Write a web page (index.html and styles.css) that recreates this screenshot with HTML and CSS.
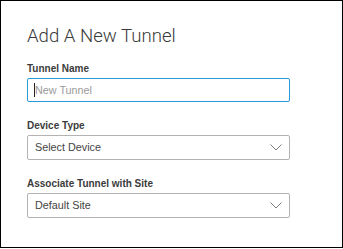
FILE: index.html
```html
<!DOCTYPE html>
<html lang="en">
<head>
    <meta charset="UTF-8">
    <meta name="viewport" content="width=device-width, initial-scale=1.0">
    <title>Add A New Tunnel</title>
    <link rel="stylesheet" href="styles.css">
</head>
<body>
    <div class="dialog">
        <h1>Add A New Tunnel</h1>

        <div class="field">
            <label for="tunnel-name">Tunnel Name</label>
            <div class="input-wrap">
                <input type="text" id="tunnel-name" placeholder="New Tunnel">
                <span class="caret"></span>
            </div>
        </div>

        <div class="field">
            <label>Device Type</label>
            <div class="select">
                <span>Select Device</span>
                <svg class="chevron" width="12" height="7" viewBox="0 0 12 7">
                    <polyline points="0.5,0.5 6,6 11.5,0.5" fill="none" stroke="#7a7a7a" stroke-width="1"/>
                </svg>
            </div>
        </div>

        <div class="field">
            <label>Associate Tunnel with Site</label>
            <div class="select">
                <span>Default Site</span>
                <svg class="chevron" width="12" height="7" viewBox="0 0 12 7">
                    <polyline points="0.5,0.5 6,6 11.5,0.5" fill="none" stroke="#7a7a7a" stroke-width="1"/>
                </svg>
            </div>
        </div>
    </div>
</body>
</html>
```

FILE: styles.css
```css
:root {
    --text-color: #333;
    --muted-color: #9a9a9a;
    --focus-color: #2a9ad6;
    --border-color: #b3b3b3;
}

body {
    margin: 0;
    font-family: "Liberation Sans", Arial, sans-serif;
    color: var(--text-color);
    background: white;
}

.dialog {
    box-sizing: border-box;
    width: 343px;
    height: 248px;
    border: 1px solid #000;
    padding: 24px 26px 0 26px;
}

h1 {
    font-family: Roboto, "Liberation Sans", sans-serif;
    font-weight: 300;
    font-size: 18.6px;
    line-height: 22px;
    color: #3a3a3a;
    margin: 0 0 16px 0;
}

.field {
    margin-bottom: 18px;
}

label {
    display: block;
    font-size: 10px;
    line-height: 12px;
    font-weight: bold;
    color: #3c3c3c;
    margin-bottom: 3px;
}

.input-wrap {
    position: relative;
    width: 263px;
}

input {
    box-sizing: border-box;
    width: 100%;
    height: 24px;
    padding: 0 7px;
    border: 1px solid var(--focus-color);
    border-radius: 2px;
    font-family: inherit;
    font-size: 10.8px;
    color: var(--text-color);
    outline: none;
}

input::placeholder {
    color: var(--muted-color);
}

.caret {
    position: absolute;
    left: 7px;
    top: 5px;
    width: 1px;
    height: 14px;
    background: #222;
}

.select {
    box-sizing: border-box;
    width: 263px;
    height: 25px;
    display: flex;
    align-items: center;
    justify-content: space-between;
    padding: 0 7px 1px 7px;
    border: 1px solid var(--border-color);
    border-radius: 2px;
    font-size: 10.8px;
    color: #444;
}

.chevron {
    display: block;
}
```
